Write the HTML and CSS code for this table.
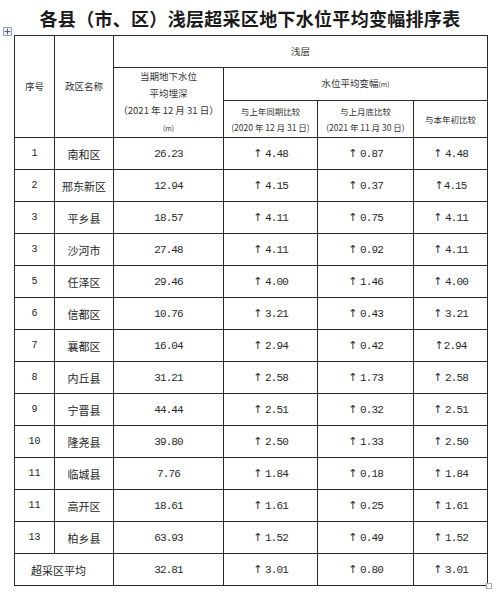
FILE: index.html
```html
<!DOCTYPE html>
<html lang="zh">
<head>
<meta charset="utf-8">
<link rel="stylesheet" href="styles.css">
</head>
<body>
<h1 class="title">各县（市、区）浅层超采区地下水位平均变幅排序表</h1>
<div class="wrap">
  <span class="handle"><svg width="9" height="9" viewBox="0 0 9 9"><rect x="0.5" y="0.5" width="8" height="8" fill="#f2f4f8" stroke="#9aa3b5"/><path d="M4.5 1.8v5.4M1.8 4.5h5.4" stroke="#556" stroke-width="0.9"/><path d="M4.5 1.5l-1 1h2zM4.5 7.5l-1-1h2zM1.5 4.5l1-1v2zM7.5 4.5l-1-1v2z" fill="#556"/></svg></span>
  <table class="tbl">
    <colgroup>
      <col class="c1"><col class="c2"><col class="c3"><col class="c4"><col class="c5"><col class="c6">
    </colgroup>
    <thead>
      <tr class="h1">
        <th rowspan="3">序号</th>
        <th rowspan="3">政区名称</th>
        <th colspan="4">浅层</th>
      </tr>
      <tr class="h2">
        <th rowspan="2" class="depth">当期地下水位<br>平均埋深<br>（2021 年 12 月 31 日）<br><span class="unit">(m)</span></th>
        <th colspan="3">水位平均变幅<span class="unit">(m)</span></th>
      </tr>
      <tr class="h3">
        <th class="sub">与上年同期比较<br>(2020 年 12 月 31 日)</th>
        <th class="sub">与上月底比较<br>(2021 年 11 月 30 日)</th>
        <th class="sub">与本年初比较</th>
      </tr>
    </thead>
    <tbody>
      <tr><td class="n">1</td><td class="nm">南和区</td><td class="v">26.23</td><td class="v"><span class="ar">↑</span> 4.48</td><td class="v"><span class="ar">↑</span> 0.87</td><td class="v"><span class="ar">↑</span> 4.48</td></tr>
      <tr><td class="n">2</td><td class="nm">邢东新区</td><td class="v">12.94</td><td class="v"><span class="ar">↑</span> 4.15</td><td class="v"><span class="ar">↑</span> 0.37</td><td class="v"><span class="ar">↑</span>4.15</td></tr>
      <tr><td class="n">3</td><td class="nm">平乡县</td><td class="v">18.57</td><td class="v"><span class="ar">↑</span> 4.11</td><td class="v"><span class="ar">↑</span> 0.75</td><td class="v"><span class="ar">↑</span> 4.11</td></tr>
      <tr><td class="n">3</td><td class="nm">沙河市</td><td class="v">27.48</td><td class="v"><span class="ar">↑</span> 4.11</td><td class="v"><span class="ar">↑</span> 0.92</td><td class="v"><span class="ar">↑</span> 4.11</td></tr>
      <tr><td class="n">5</td><td class="nm">任泽区</td><td class="v">29.46</td><td class="v"><span class="ar">↑</span> 4.00</td><td class="v"><span class="ar">↑</span> 1.46</td><td class="v"><span class="ar">↑</span> 4.00</td></tr>
      <tr><td class="n">6</td><td class="nm">信都区</td><td class="v">10.76</td><td class="v"><span class="ar">↑</span> 3.21</td><td class="v"><span class="ar">↑</span> 0.43</td><td class="v"><span class="ar">↑</span> 3.21</td></tr>
      <tr><td class="n">7</td><td class="nm">襄都区</td><td class="v">16.04</td><td class="v"><span class="ar">↑</span> 2.94</td><td class="v"><span class="ar">↑</span> 0.42</td><td class="v"><span class="ar">↑</span>2.94</td></tr>
      <tr><td class="n">8</td><td class="nm">内丘县</td><td class="v">31.21</td><td class="v"><span class="ar">↑</span> 2.58</td><td class="v"><span class="ar">↑</span> 1.73</td><td class="v"><span class="ar">↑</span> 2.58</td></tr>
      <tr><td class="n">9</td><td class="nm">宁晋县</td><td class="v">44.44</td><td class="v"><span class="ar">↑</span> 2.51</td><td class="v"><span class="ar">↑</span> 0.32</td><td class="v"><span class="ar">↑</span> 2.51</td></tr>
      <tr><td class="n">10</td><td class="nm">隆尧县</td><td class="v">39.80</td><td class="v"><span class="ar">↑</span> 2.50</td><td class="v"><span class="ar">↑</span> 1.33</td><td class="v"><span class="ar">↑</span> 2.50</td></tr>
      <tr><td class="n">11</td><td class="nm">临城县</td><td class="v">7.76</td><td class="v"><span class="ar">↑</span> 1.84</td><td class="v"><span class="ar">↑</span> 0.18</td><td class="v"><span class="ar">↑</span> 1.84</td></tr>
      <tr><td class="n">11</td><td class="nm">高开区</td><td class="v">18.61</td><td class="v"><span class="ar">↑</span> 1.61</td><td class="v"><span class="ar">↑</span> 0.25</td><td class="v"><span class="ar">↑</span> 1.61</td></tr>
      <tr><td class="n">13</td><td class="nm">柏乡县</td><td class="v">63.93</td><td class="v"><span class="ar">↑</span> 1.52</td><td class="v"><span class="ar">↑</span> 0.49</td><td class="v"><span class="ar">↑</span> 1.52</td></tr>
      <tr><td colspan="2" class="avg">超采区平均</td><td class="v">32.81</td><td class="v"><span class="ar">↑</span> 3.01</td><td class="v"><span class="ar">↑</span> 0.80</td><td class="v"><span class="ar">↑</span> 3.01</td></tr>
    </tbody>
  </table>
  <span class="corner"></span>
</div>
</body>
</html>
```

FILE: styles.css
```css
html, body {
  margin: 0;
  padding: 0;
  background: #fff;
}
body {
  width: 500px;
  height: 592px;
  overflow: hidden;
  font-family: "Noto Sans CJK SC", "Liberation Sans", sans-serif;
  color: #262626;
}
.title {
  margin: 0;
  padding-top: 5px;
  height: 30px;
  line-height: 26px;
  font-size: 18px;
  font-weight: 700;
  text-align: center;
  color: #1a1a1a;
  letter-spacing: 0.3px;
}
.wrap {
  position: relative;
  padding-left: 14px;
}
.handle {
  position: absolute;
  left: 3px;
  top: -8px;
  width: 9px;
  height: 9px;
  line-height: 0;
}
.corner {
  position: absolute;
  left: 486px;
  top: 548px;
  width: 4px;
  height: 4px;
  border: 1px solid #aaa;
  background: #fff;
}
.tbl {
  border-collapse: collapse;
  table-layout: fixed;
  width: 473px;
}
.c1 { width: 40px; }
.c2 { width: 59px; }
.c3 { width: 110px; }
.c4 { width: 94px; }
.c5 { width: 96px; }
.c6 { width: 74px; }
.tbl th, .tbl td {
  border: 1px solid #2a2a2a;
  padding: 0;
  text-align: center;
  vertical-align: middle;
  font-weight: 400;
}
.tbl th {
  font-size: 9.5px;
  color: #333;
  line-height: 17px;
}
.h1 { height: 32px; }
.h2 { height: 32px; }
.h3 { height: 36px; }
.tbl th.sub {
  font-size: 8.5px;
  line-height: 16px;
}
.depth {
  font-size: 9.5px;
}
.unit {
  font-size: 7px;
}
.tbl tbody tr { height: 32px; }
.n {
  font-family: "Liberation Mono", monospace;
  font-size: 10px;
}
.nm {
  font-size: 11px;
}
.v {
  font-family: "Liberation Mono", monospace;
  font-size: 11px;
  letter-spacing: -0.9px;
  word-spacing: -3px;
  white-space: pre;
  color: #2a2a2a;
}
.ar {
  font-family: "DejaVu Sans", sans-serif;
  font-size: 11px;
  letter-spacing: 0;
  word-spacing: 0;
}
.avg {
  text-align: left !important;
  padding-left: 16px !important;
  font-size: 11px;
}
```
